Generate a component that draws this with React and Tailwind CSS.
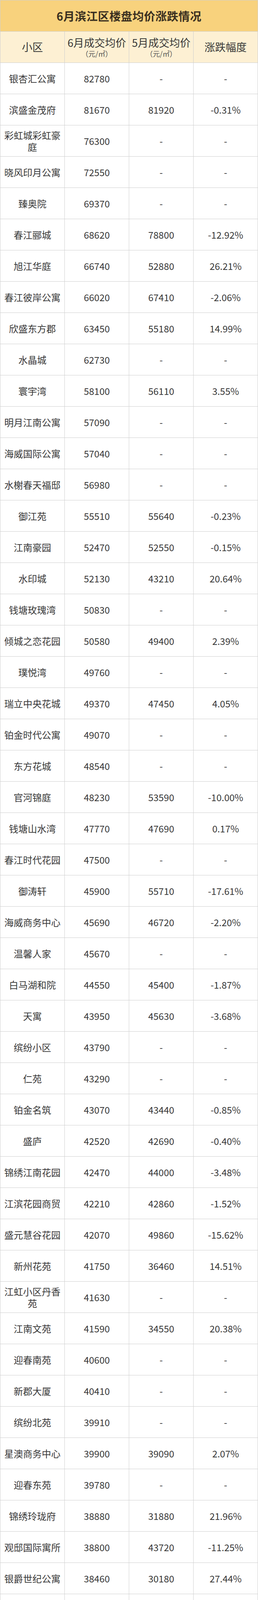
// App.jsx - 6月滨江区楼盘均价涨跌情况
import React from 'react';

const rows = [
  ['银杏汇公寓', '82780', '-', '-'],
  ['滨盛金茂府', '81670', '81920', '-0.31%'],
  ['彩虹城彩虹豪庭', '76300', '-', '-'],
  ['晓风印月公寓', '72550', '-', '-'],
  ['臻奥院', '69370', '-', '-'],
  ['春江郦城', '68620', '78800', '-12.92%'],
  ['旭江华庭', '66740', '52880', '26.21%'],
  ['春江彼岸公寓', '66020', '67410', '-2.06%'],
  ['欣盛东方郡', '63450', '55180', '14.99%'],
  ['水晶城', '62730', '-', '-'],
  ['寰宇湾', '58100', '56110', '3.55%'],
  ['明月江南公寓', '57090', '-', '-'],
  ['海威国际公寓', '57040', '-', '-'],
  ['水榭春天福邸', '56980', '-', '-'],
  ['御江苑', '55510', '55640', '-0.23%'],
  ['江南豪园', '52470', '52550', '-0.15%'],
  ['水印城', '52130', '43210', '20.64%'],
  ['钱塘玫瑰湾', '50830', '-', '-'],
  ['倾城之恋花园', '50580', '49400', '2.39%'],
  ['璞悦湾', '49760', '-', '-'],
  ['瑞立中央花城', '49370', '47450', '4.05%'],
  ['铂金时代公寓', '49070', '-', '-'],
  ['东方花城', '48540', '-', '-'],
  ['官河锦庭', '48230', '53590', '-10.00%'],
  ['钱塘山水湾', '47770', '47690', '0.17%'],
  ['春江时代花园', '47500', '-', '-'],
  ['御涛轩', '45900', '55710', '-17.61%'],
  ['海威商务中心', '45690', '46720', '-2.20%'],
  ['温馨人家', '45670', '-', '-'],
  ['白马湖和院', '44550', '45400', '-1.87%'],
  ['天寓', '43950', '45630', '-3.68%'],
  ['缤纷小区', '43790', '-', '-'],
  ['仁苑', '43290', '-', '-'],
  ['铂金名筑', '43070', '43440', '-0.85%'],
  ['盛庐', '42520', '42690', '-0.40%'],
  ['锦绣江南花园', '42470', '44000', '-3.48%'],
  ['江滨花园商贸', '42210', '42860', '-1.52%'],
  ['盛元慧谷花园', '42070', '49860', '-15.62%'],
  ['新州花苑', '41750', '36460', '14.51%'],
  ['江虹小区丹香苑', '41630', '-', '-'],
  ['江南文苑', '41590', '34550', '20.38%'],
  ['迎春南苑', '40600', '-', '-'],
  ['新郡大厦', '40410', '-', '-'],
  ['缤纷北苑', '39910', '-', '-'],
  ['星澳商务中心', '39900', '39090', '2.07%'],
  ['迎春东苑', '39780', '-', '-'],
  ['锦绣玲珑府', '38880', '31880', '21.96%'],
  ['观邸国际寓所', '38800', '43720', '-11.25%'],
  ['银爵世纪公寓', '38460', '30180', '27.44%'],
  ['湘云雅苑', '38390', '44110', '-12.97%'],
  ['贺田尚城', '38150', '41070', '-7.11%'],
  ['钱塘景苑', '38140', '37570', '1.52%'],
  ['逸天广场', '37930', '39660', '-4.36%'],
  ['滨兴小区', '37790', '-', '-'],
  ['星汇荣邸', '37680', '35280', '6.80%'],
  ['风景蝶院', '37650', '35840', '5.05%'],
  ['嘉凯城云上', '37330', '44010', '-15.18%'],
  ['君景庭', '37150', '29860', '24.41%'],
  ['风情苑', '37120', '32760', '13.31%'],
  ['巧圆公寓', '36520', '-', '-'],
  ['云第公寓', '36260', '36190', '0.19%'],
  ['东和时代', '35420', '-', '-'],
  ['聚才大厦', '35250', '35410', '-0.45%'],
  ['钱江湾花园', '35140', '-', '-'],
  ['长河街道春波西苑', '34750', '-', '-'],
  ['星澜大厦', '34440', '34280', '0.47%'],
  ['冠山小区', '34090', '-', '-'],
  ['中兴花园', '33900', '41320', '-17.96%'],
  ['江南铭庭', '33800', '34700', '-2.59%'],
  ['白马湖小区孔雀苑', '32360', '-', '-'],
  ['南岸晶都花园', '31970', '34300', '-6.79%'],
  ['浙新小区', '31910', '33780', '-5.54%'],
  ['长虹苑', '31180', '-', '-'],
  ['铁岭花园', '30800', '-', '-'],
  ['中兴和园茗馨苑', '29830', '25480', '17.07%'],
  ['白马湖小区凤凰苑', '29630', '23050', '28.55%'],
  ['长江西苑', '28840', '-', '-'],
  ['一村六眼井', '28740', '-', '-'],
  ['君尚大厦', '28130', '32470', '-13.37%'],
  ['兴盛花园', '27980', '25670', '9.00%'],
  ['长兴苑', '27570', '27600', '-0.11%'],
  ['白马湖小区鸿雁苑', '26770', '-', '-'],
  ['白马湖小区白鹤苑', '26570', '-', '-'],
  ['康康谷商业中心', '26490', '-', '-'],
  ['火炬小区', '25360', '-', '-'],
  ['浦沿街道积家', '25200', '-', '-'],
];

/** One table cell, 80px tall with right/bottom rule */
function Cell({ children, className = '' }) {
  return (
    <div
      className={`flex h-20 items-center justify-center border-r border-b border-[#cfcfcf] px-[10px] text-center ${className}`}
    >
      {children}
    </div>
  );
}

function PriceHead({ month }) {
  return (
    <div className="flex flex-col items-center whitespace-nowrap">
      <span className="text-[27px] leading-[32px]">{month}月成交均价</span>
      <span className="text-[18px] leading-[24px] text-[#555]">（元/㎡）</span>
    </div>
  );
}

export default function App() {
  return (
    <div className="w-[661px] bg-white font-['Noto_Sans_CJK_SC','Noto_Sans',sans-serif] text-[#383838]">
      <div className="border-t border-l border-[#cfcfcf]">
        <div className="flex h-20 items-center justify-center border-r border-b border-[#cfcfcf] bg-[#f8d27d]">
          <h1 className="text-[29px] font-bold tracking-[0.5px] text-[#3a2f20]">6月滨江区楼盘均价涨跌情况</h1>
        </div>

        <div className="grid grid-cols-4 bg-[#fdf0d3]">
          <Cell className="text-[27px]">小区</Cell>
          <Cell className="px-[4px]">
            <PriceHead month="6" />
          </Cell>
          <Cell className="px-[4px]">
            <PriceHead month="5" />
          </Cell>
          <Cell className="text-[27px]">涨跌幅度</Cell>
        </div>

        <div className="grid grid-cols-4 text-[24px]">
          {rows.map(([name, june, may, change], i) => (
            <React.Fragment key={i}>
              <Cell className="leading-[30px]">{name}</Cell>
              <Cell>{june}</Cell>
              <Cell>{may}</Cell>
              <Cell>{change}</Cell>
            </React.Fragment>
          ))}
        </div>
      </div>
    </div>
  );
}
